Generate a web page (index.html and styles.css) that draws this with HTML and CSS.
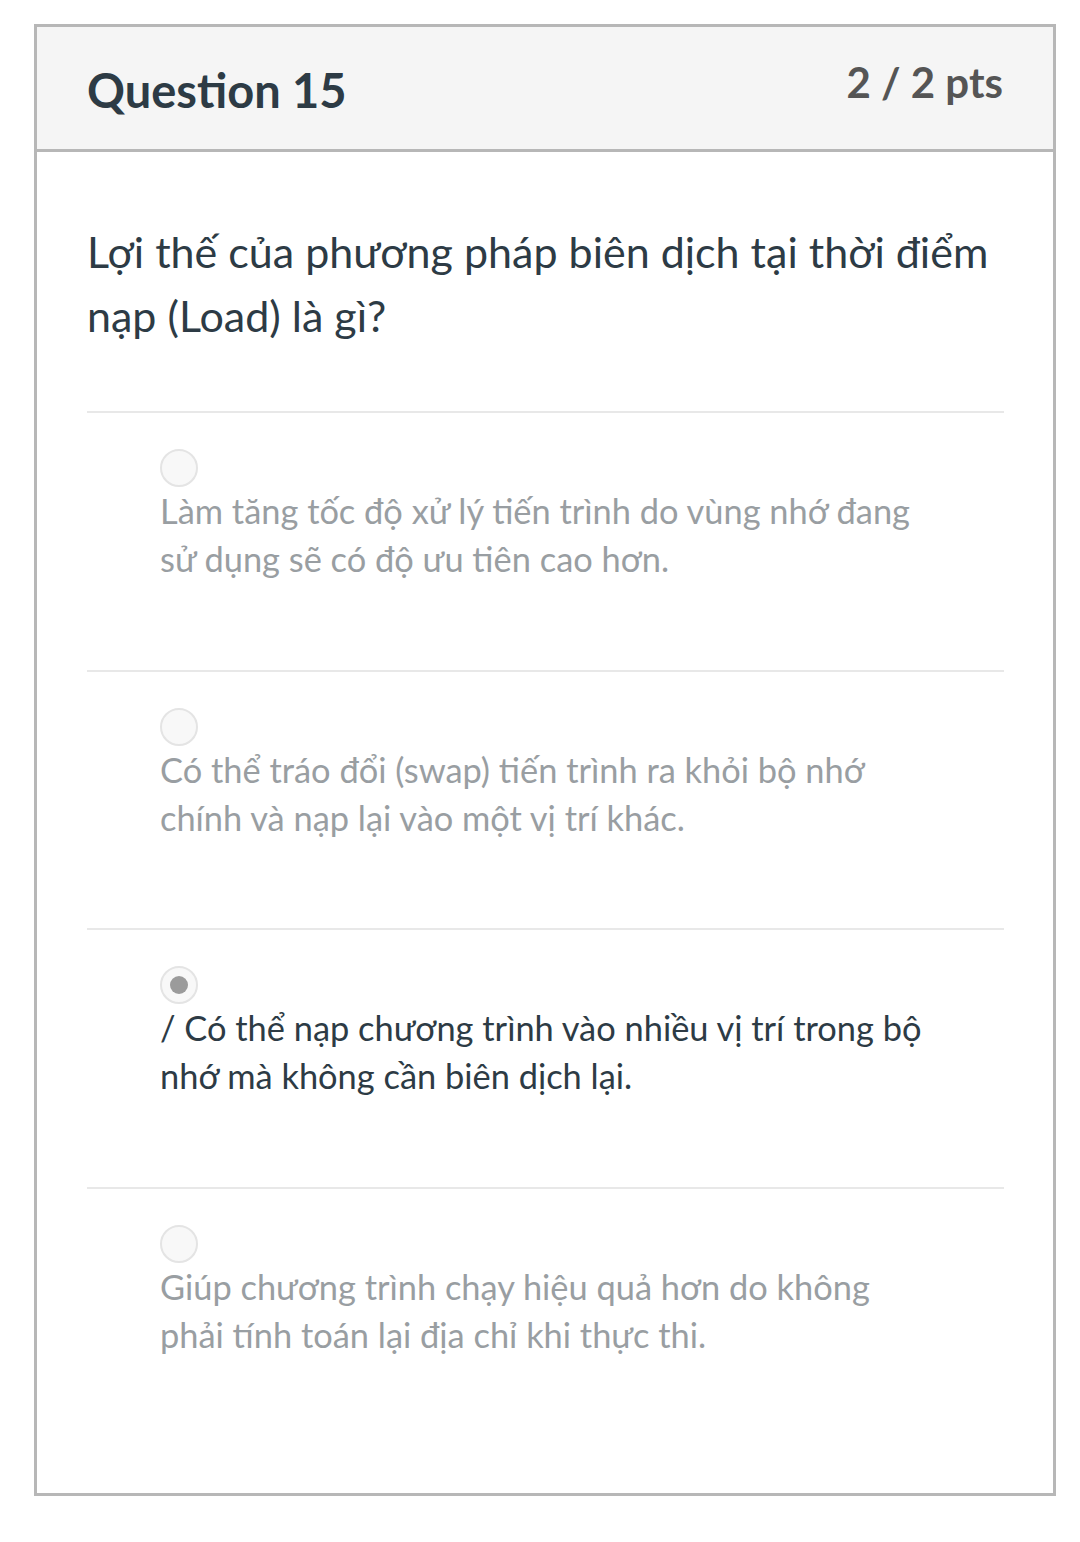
FILE: index.html
```html
<!DOCTYPE html>
<html lang="vi">
<head>
<meta charset="utf-8">
<link rel="stylesheet" href="styles.css">
</head>
<body>
<div class="card">
  <div class="card-header">
    <h2 class="q-title">Question 15</h2>
    <div class="q-pts">2 / 2 pts</div>
  </div>
  <div class="card-body">
    <p class="q-text">Lợi thế của phương pháp biên dịch tại thời điểm nạp (Load) là gì?</p>
    <div class="answers">
      <div class="answer">
        <span class="radio"></span>
        <div class="answer-text">Làm tăng tốc độ xử lý tiến trình do vùng nhớ đang sử dụng sẽ có độ ưu tiên cao hơn.</div>
      </div>
      <div class="answer">
        <span class="radio"></span>
        <div class="answer-text">Có thể tráo đổi (swap) tiến trình ra khỏi bộ nhớ chính và nạp lại vào một vị trí khác.</div>
      </div>
      <div class="answer selected">
        <span class="radio"><span class="dot"></span></span>
        <div class="answer-text">/ Có thể nạp chương trình vào nhiều vị trí trong bộ nhớ mà không cần biên dịch lại.</div>
      </div>
      <div class="answer">
        <span class="radio"></span>
        <div class="answer-text">Giúp chương trình chạy hiệu quả hơn do không phải tính toán lại địa chỉ khi thực thi.</div>
      </div>
    </div>
  </div>
</div>
</body>
</html>
```

FILE: styles.css
```css
* { box-sizing: border-box; }
html, body { margin: 0; padding: 0; background: #fff; }
body {
  font-family: Lato, "Noto Sans", sans-serif;
  padding: 24px 24px 0 34px;
  width: 1080px;
  height: 1542px;
}
.card {
  border: 3px solid #b7b7b7;
  width: 1022px;
  height: 1472px;
  display: flex;
  flex-direction: column;
}
.card-header {
  background: #f5f5f5;
  border-bottom: 3px solid #b7b7b7;
  height: 125px;
  display: flex;
  justify-content: space-between;
  align-items: flex-start;
  padding: 0 50px;
}
.q-title {
  margin: 0;
  padding-top: 35px;
  font-size: 47px;
  font-weight: 700;
  line-height: 56px;
  color: #2d3b45;
}
.q-pts {
  padding-top: 30px;
  font-size: 42px;
  font-weight: 700;
  line-height: 50px;
  color: #555;
}
.card-body {
  padding: 68px 49px 0 50px;
}
.q-text {
  margin: 0 0 63px;
  font-size: 43px;
  line-height: 64px;
  color: #2d3b45;
}
.answer {
  border-top: 2px solid #e8e8e8;
  padding: 36px 0 0 73px;
  height: 258.7px;
}
.radio {
  display: flex;
  align-items: center;
  justify-content: center;
  width: 38px;
  height: 38px;
  border-radius: 50%;
  border: 2px solid #e4e4e4;
  background: #f8f8f8;
}
.dot {
  width: 18px;
  height: 18px;
  border-radius: 50%;
  background: #9b9b9b;
}
.answer-text {
  font-size: 34.4px;
  line-height: 48px;
  color: #999ea2;
  padding-right: 70px;
}
.answer.selected .answer-text { color: #2d3b45; }
```
